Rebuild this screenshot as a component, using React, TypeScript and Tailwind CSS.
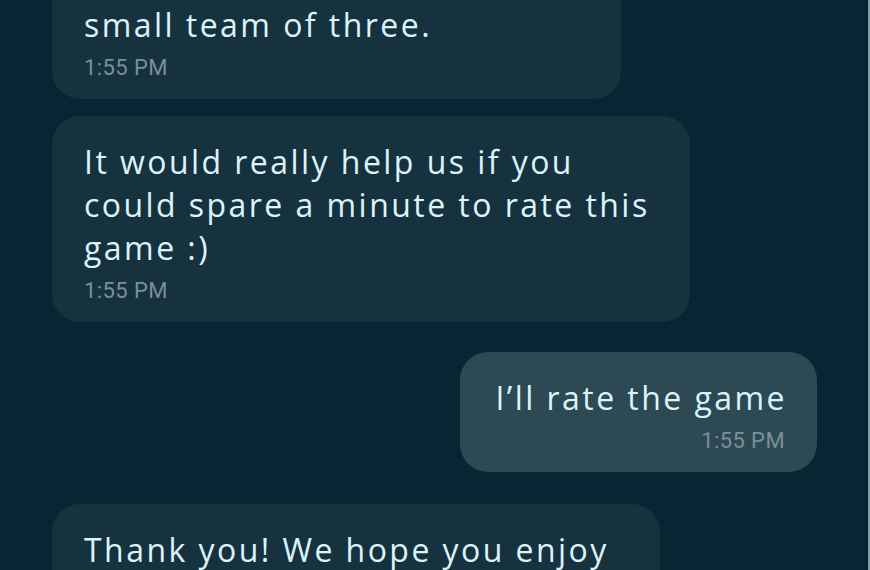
import React from "react";

const textCls =
  "text-[32px] leading-[43px] text-[#dcf3fa] font-['Open_Sans','Liberation_Sans',sans-serif] tracking-[2.45px]";
const timeCls =
  "mt-[10px] text-[22px] leading-[24px] text-[#7b8f97] font-['Roboto','Liberation_Sans',sans-serif] tracking-[0.4px]";

function Incoming({ lines, width, className = "" }: { lines: string[]; width: string; className?: string }) {
  return (
    <div className={`self-start rounded-[28px] bg-[#17323f] pl-[32px] pr-[24px] pt-[24px] pb-[19px] ${width} ${className}`}>
      <div className={textCls}>
        {lines.map((l, i) => (
          <div key={i} className="whitespace-nowrap">{l}</div>
        ))}
      </div>
      <div className={timeCls}>1:55 PM</div>
    </div>
  );
}

export default function App() {
  return (
    <div className="w-[870px] h-[570px] overflow-hidden bg-[#052632] flex">
      <div className="flex-1 flex flex-col pl-[52px] pr-[51px]">
        <Incoming lines={["small team of three."]} width="w-[569px]" className="mt-[-21px]" />
        <Incoming
          lines={["It would really help us if you", "could spare a minute to rate this", "game :)"]}
          width="w-[638px]"
          className="mt-[17px]"
        />
        <div className="self-end mt-[30px] rounded-[28px] bg-[#2d4954] pl-[32px] pr-[32px] pt-[24px] pb-[19px] w-[357px] flex flex-col items-end">
          <div className={`${textCls} whitespace-nowrap mr-[-2px]`}>I’ll rate the game</div>
          <div className={timeCls}>1:55 PM</div>
        </div>
        <Incoming lines={["Thank you! We hope you enjoy"]} width="w-[608px]" className="mt-[32px] shrink-0" />
      </div>
      <div className="w-[2px] bg-[#7d9ca3]" />
    </div>
  );
}
